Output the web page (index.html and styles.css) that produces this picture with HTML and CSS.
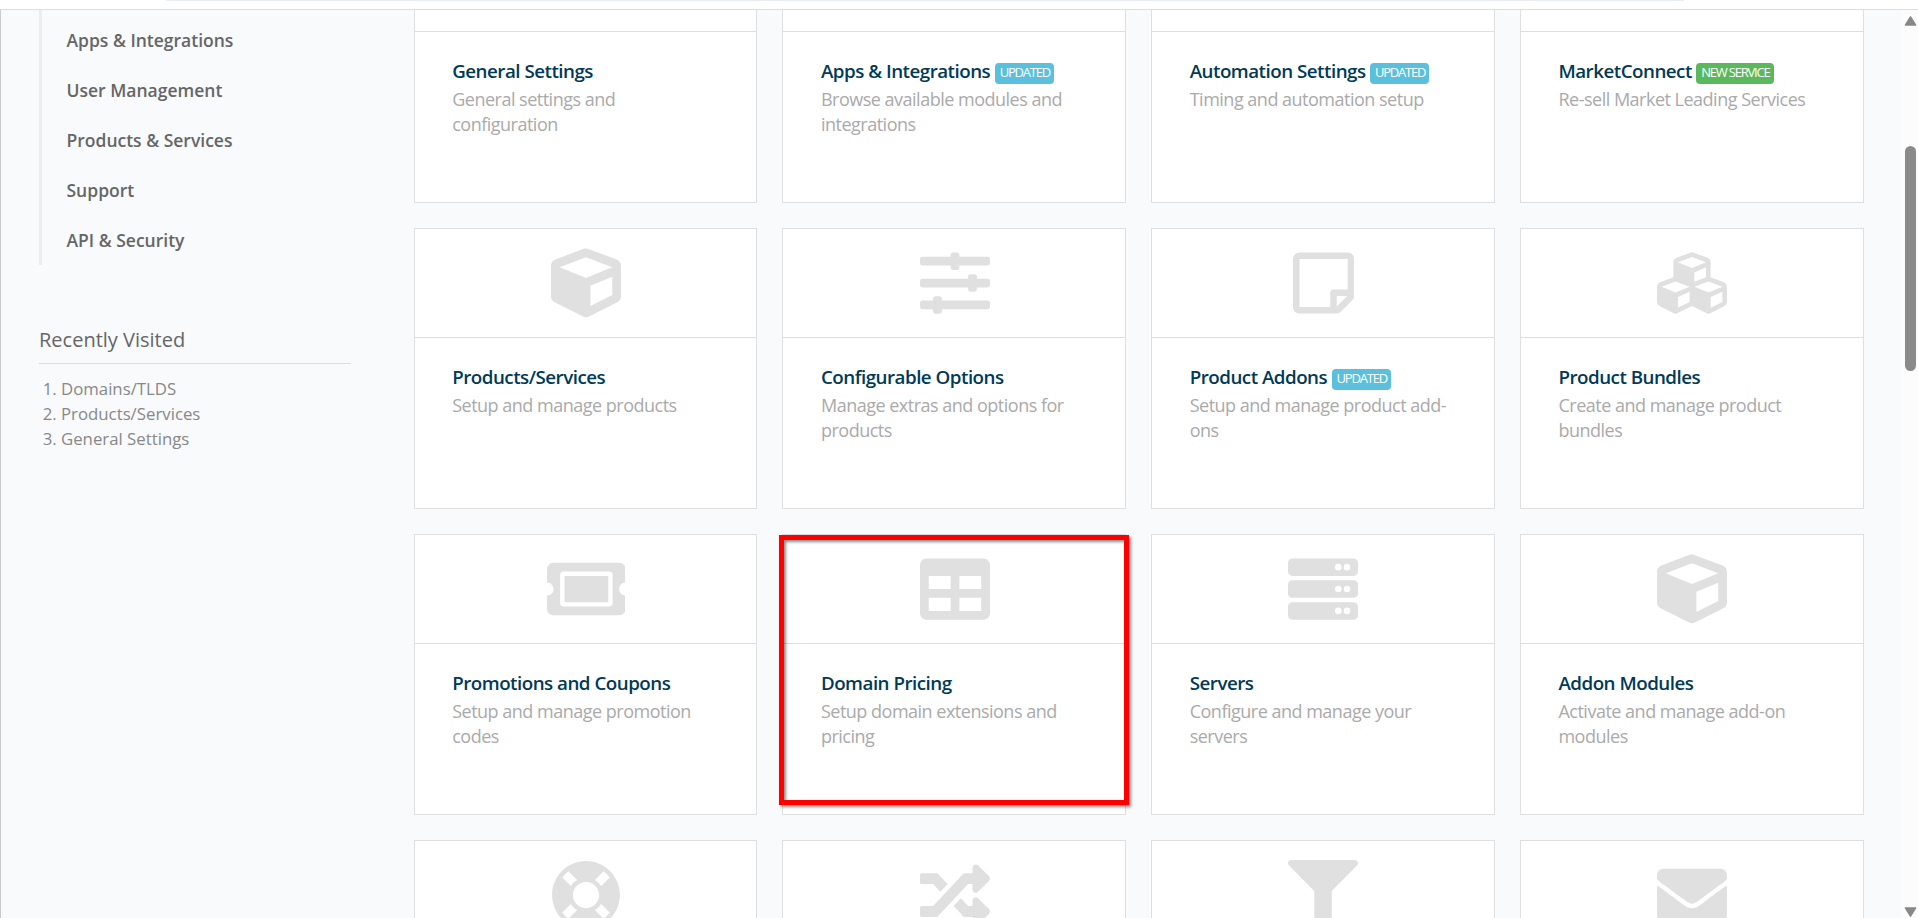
FILE: index.html
```html
<!DOCTYPE html>
<html lang="en">
<head>
  <meta charset="utf-8">
  <title>System Settings</title>
  <link rel="stylesheet" href="styles.css">
</head>
<body>
  <div class="topbar"><div class="address"></div></div>

  <div class="page">
    <div class="sidebar">
      <ul class="categories">
        <li>Apps &amp; Integrations</li>
        <li>User Management</li>
        <li>Products &amp; Services</li>
        <li>Support</li>
        <li>API &amp; Security</li>
      </ul>

      <h2>Recently Visited</h2>
      <ol class="recent">
        <li>Domains/TLDS</li>
        <li>Products/Services</li>
        <li>General Settings</li>
      </ol>
    </div>

    <div class="grid">
      <div class="card">
        <div class="icon"></div>
        <div class="info">
          <h3>General Settings</h3>
          <p>General settings and configuration</p>
        </div>
      </div>
      <div class="card">
        <div class="icon"></div>
        <div class="info">
          <h3>Apps &amp; Integrations <span class="label">UPDATED</span></h3>
          <p>Browse available modules and integrations</p>
        </div>
      </div>
      <div class="card">
        <div class="icon"></div>
        <div class="info">
          <h3>Automation Settings <span class="label">UPDATED</span></h3>
          <p>Timing and automation setup</p>
        </div>
      </div>
      <div class="card">
        <div class="icon"></div>
        <div class="info">
          <h3>MarketConnect <span class="label green">NEW SERVICE</span></h3>
          <p>Re-sell Market Leading Services</p>
        </div>
      </div>

      <div class="card">
        <div class="icon">
          <svg viewBox="0 0 512 512"><path id="cube" d="M239.1 6.3l-208 78c-18.7 7-31.1 25-31.1 45v225.1c0 18.2 10.3 34.8 26.5 42.9l208 104c13.5 6.8 29.4 6.8 42.9 0l208-104c16.3-8.1 26.5-24.8 26.5-42.9V129.3c0-20-12.4-37.9-31.1-44.9l-208-78C262 2.2 250 2.2 239.1 6.3zM256 68.4l192 72v1.1l-192 78-192-78v-1.1l192-72zm32 356V275.5l160-65v133.9l-160 80z"/></svg>
        </div>
        <div class="info">
          <h3>Products/Services</h3>
          <p>Setup and manage products</p>
        </div>
      </div>
      <div class="card">
        <div class="icon">
          <svg viewBox="0 0 512 512"><path d="M496 384H160v-16c0-8.8-7.2-16-16-16h-32c-8.8 0-16 7.2-16 16v16H16c-8.8 0-16 7.2-16 16v32c0 8.8 7.2 16 16 16h80v16c0 8.8 7.2 16 16 16h32c8.8 0 16-7.2 16-16v-16h336c8.8 0 16-7.2 16-16v-32c0-8.8-7.2-16-16-16zm0-160h-80v-16c0-8.8-7.2-16-16-16h-32c-8.8 0-16 7.2-16 16v16H16c-8.8 0-16 7.2-16 16v32c0 8.8 7.2 16 16 16h336v16c0 8.8 7.2 16 16 16h32c8.8 0 16-7.2 16-16v-16h80c8.8 0 16-7.2 16-16v-32c0-8.8-7.2-16-16-16zm0-160H288V48c0-8.8-7.2-16-16-16h-32c-8.8 0-16 7.2-16 16v16H16C7.2 64 0 71.2 0 80v32c0 8.8 7.2 16 16 16h208v16c0 8.8 7.2 16 16 16h32c8.8 0 16-7.2 16-16v-16h208c8.8 0 16-7.2 16-16V80c0-8.8-7.2-16-16-16z"/></svg>
        </div>
        <div class="info">
          <h3>Configurable Options</h3>
          <p>Manage extras and options for products</p>
        </div>
      </div>
      <div class="card">
        <div class="icon">
          <svg viewBox="0 0 448 512"><path d="M448 348.106V80c0-26.51-21.49-48-48-48H48C21.49 32 0 53.49 0 80v351.988c0 26.51 21.49 48 48 48h268.118a48 48 0 0 0 33.941-14.059l83.882-83.882A48 48 0 0 0 448 348.106zm-128 80v-76.118h76.118L320 428.106zM400 80v223.988H296c-13.255 0-24 10.745-24 24v104H48V80h352z"/></svg>
        </div>
        <div class="info">
          <h3>Product Addons <span class="label">UPDATED</span></h3>
          <p>Setup and manage product add-ons</p>
        </div>
      </div>
      <div class="card">
        <div class="icon">
          <svg viewBox="0 0 512 512"><path d="M488.6 250.2L392 214V105.5c0-15-9.3-28.4-23.4-33.7l-100-37.5c-8.1-3.1-17.1-3.1-25.3 0l-100 37.5c-14.1 5.3-23.4 18.7-23.4 33.7V214l-96.6 36.2C9.3 255.5 0 268.9 0 283.9V394c0 13.6 7.7 26.1 19.9 32.2l100 50c10.1 5.1 22.1 5.1 32.2 0l103.9-52 103.9 52c10.1 5.1 22.1 5.1 32.2 0l100-50c12.2-6.1 19.9-18.6 19.9-32.2V283.9c0-15-9.3-28.4-23.4-33.7zM358 214.8l-85 31.9v-68.2l85-37v73.3zM154 104.1l102-38.2 102 38.2v.6l-102 41.4-102-41.4v-.6zm84 291.1l-85 42.5v-79.1l85-38.8v75.4zm0-112l-102 41.4-102-41.4v-.6l102-38.2 102 38.2v.6zm240 112l-85 42.5v-79.1l85-38.8v75.4zm0-112l-102 41.4-102-41.4v-.6l102-38.2 102 38.2v.6z"/></svg>
        </div>
        <div class="info">
          <h3>Product Bundles</h3>
          <p>Create and manage product bundles</p>
        </div>
      </div>

      <div class="card">
        <div class="icon">
          <svg viewBox="0 0 576 512"><path d="M128 160h320v192H128V160zm400 96c0 26.51 21.49 48 48 48v96c0 26.51-21.49 48-48 48H48c-26.51 0-48-21.49-48-48v-96c26.51 0 48-21.49 48-48s-21.49-48-48-48v-96c0-26.51 21.49-48 48-48h480c26.51 0 48 21.49 48 48v96c-26.51 0-48 21.49-48 48zm-48-104c0-13.255-10.745-24-24-24H120c-13.255 0-24 10.745-24 24v208c0 13.255 10.745 24 24 24h336c13.255 0 24-10.745 24-24V152z"/></svg>
        </div>
        <div class="info">
          <h3>Promotions and Coupons</h3>
          <p>Setup and manage promotion codes</p>
        </div>
      </div>
      <div class="card highlighted">
        <div class="icon">
          <svg viewBox="0 0 512 512"><path d="M464 32H48C21.49 32 0 53.49 0 80v352c0 26.51 21.49 48 48 48h416c26.51 0 48-21.49 48-48V80c0-26.51-21.49-48-48-48zM224 416H64v-96h160v96zm0-160H64v-96h160v96zm224 160H288v-96h160v96zm0-160H288v-96h160v96z"/></svg>
        </div>
        <div class="info">
          <h3>Domain Pricing</h3>
          <p>Setup domain extensions and pricing</p>
        </div>
      </div>
      <div class="card">
        <div class="icon">
          <svg viewBox="0 0 512 512">
            <rect y="32" width="512" height="128" rx="32"/>
            <rect y="192" width="512" height="128" rx="32"/>
            <rect y="352" width="512" height="128" rx="32"/>
            <g fill="#fff">
              <circle cx="368" cy="96" r="24"/><circle cx="432" cy="96" r="24"/>
              <circle cx="368" cy="256" r="24"/><circle cx="432" cy="256" r="24"/>
              <circle cx="368" cy="416" r="24"/><circle cx="432" cy="416" r="24"/>
            </g>
          </svg>
        </div>
        <div class="info">
          <h3>Servers</h3>
          <p>Configure and manage your servers</p>
        </div>
      </div>
      <div class="card">
        <div class="icon">
          <svg viewBox="0 0 512 512"><use href="#cube"/></svg>
        </div>
        <div class="info">
          <h3>Addon Modules</h3>
          <p>Activate and manage add-on modules</p>
        </div>
      </div>

      <div class="card">
        <div class="icon">
          <svg viewBox="0 0 512 512"><path d="M256 8C119.033 8 8 119.033 8 256s111.033 248 248 248 248-111.033 248-248S392.967 8 256 8zm173.696 119.559l-63.399 63.399c-10.987-18.559-26.67-34.252-45.255-45.255l63.399-63.399a218.396 218.396 0 0 1 45.255 45.255zM256 352c-53.019 0-96-42.981-96-96s42.981-96 96-96 96 42.981 96 96-42.981 96-96 96zM127.559 82.304l63.399 63.399c-18.559 10.987-34.252 26.67-45.255 45.255l-63.399-63.399a218.372 218.372 0 0 1 45.255-45.255zM82.304 384.441l63.399-63.399c10.987 18.559 26.67 34.252 45.255 45.255l-63.399 63.399a218.396 218.396 0 0 1-45.255-45.255zm302.137 45.255l-63.399-63.399c18.559-10.987 34.252-26.67 45.255-45.255l63.399 63.399a218.403 218.403 0 0 1-45.255 45.255z"/></svg>
        </div>
      </div>
      <div class="card">
        <div class="icon">
          <svg viewBox="0 0 512 512"><path d="M504.971 359.029c9.373 9.373 9.373 24.569 0 33.941l-80 79.984c-15.01 15.01-40.971 4.49-40.971-16.971V416h-58.785a12.004 12.004 0 0 1-8.773-3.812l-70.556-75.596 53.333-57.143L352 336h32v-39.981c0-21.438 25.943-31.998 40.971-16.971l80 79.981zM12 176h84l52.781 56.551 53.333-57.143-70.556-75.596A11.999 11.999 0 0 0 122.785 96H12c-6.627 0-12 5.373-12 12v56c0 6.627 5.373 12 12 12zm372 0v39.984c0 21.46 25.961 31.98 40.971 16.971l80-79.984c9.373-9.373 9.373-24.569 0-33.941l-80-79.981C409.943 24.021 384 34.582 384 56.019V96h-58.785a12.004 12.004 0 0 0-8.773 3.812L96 336H12c-6.627 0-12 5.373-12 12v56c0 6.627 5.373 12 12 12h110.785c3.326 0 6.503-1.381 8.773-3.812L352 176h32z"/></svg>
        </div>
      </div>
      <div class="card">
        <div class="icon">
          <svg viewBox="0 0 512 512"><path d="M487.976 0H24.028C2.71 0-8.047 25.866 7.058 40.971L192 225.941V432c0 7.831 3.821 15.17 10.237 19.662l80 55.98C298.02 518.69 320 507.493 320 487.98V225.941l184.947-184.97C520.021 25.896 509.338 0 487.976 0z"/></svg>
        </div>
      </div>
      <div class="card">
        <div class="icon">
          <svg viewBox="0 0 512 512"><path d="M502.3 190.8c3.9-3.1 9.7-.2 9.7 4.7V400c0 26.5-21.5 48-48 48H48c-26.5 0-48-21.5-48-48V195.6c0-5 5.7-7.8 9.7-4.7 22.4 17.4 52.1 39.5 154.1 113.6 21.1 15.4 56.7 47.8 92.2 47.6 35.7.3 72-32.8 92.3-47.6 102-74.1 131.6-96.3 154-113.7zM256 320c23.2.4 56.6-29.2 73.4-41.4 132.7-96.3 142.8-104.7 173.4-128.7 5.8-4.5 9.2-11.5 9.2-18.9v-19c0-26.5-21.5-48-48-48H48c-26.5 0-48 21.5-48 48v19c0 7.4 3.4 14.3 9.2 18.9 30.6 23.9 40.7 32.4 173.4 128.7 16.8 12.2 50.2 41.8 73.4 41.4z"/></svg>
        </div>
      </div>
    </div>

    <div class="scrollbar">
      <svg class="arrow" viewBox="0 0 12 10"><path d="M6 1L11 9H1z" stroke-width="1.5" stroke-linejoin="round"/></svg>
      <div class="thumb"></div>
      <svg class="arrow" viewBox="0 0 12 10"><path d="M6 9L1 1h10z" stroke-width="1.5" stroke-linejoin="round"/></svg>
    </div>
  </div>
</body>
</html>
```
FILE: styles.css
```css
*, *::after {
  box-sizing: border-box;
}

body {
  display: flex;
  flex-direction: column;
  height: 918px;
  margin: 0;
  overflow: hidden;
  background: #f8fafc;
  color: #666;
  font-family: "Open Sans", "Liberation Sans", sans-serif;
  font-size: 17.5px;
  line-height: 25px;
}

h2, h3, p, ul, ol {
  margin: 0;
  padding: 0;
  font-weight: normal;
}

.topbar {
  flex: none;
  height: 10px;
  background: #fff;
  border-bottom: 1px solid #dcdedf;
}

.address {
  width: 1518px;
  height: 1px;
  margin-left: 166px;
  background: #ebedf5;
}

.page {
  flex: 1;
  display: flex;
  min-height: 0;
  overflow: hidden;
  border-left: 1px solid #c8cacc;
}

.sidebar {
  flex: none;
  width: 349.6px;
  margin: 0 25px 0 38px;
}

.categories {
  width: 312px;
  padding: 5px 0 0 24.5px;
  border-left: 3px solid #ebedee;
  list-style: none;
  font-weight: 600;
}

.categories li {
  height: 50px;
  line-height: 50px;
}

.sidebar h2 {
  width: 312px;
  height: 48px;
  margin-top: 51px;
  padding-top: 10px;
  border-bottom: 1px solid #dcdedf;
  font-size: 20px;
  line-height: 27px;
}

.recent {
  margin-top: 12px;
  padding-left: 22px;
  color: #888;
  font-size: 16.8px;
}

.grid {
  flex: none;
  width: 1450px;
  display: grid;
  grid-template-columns: repeat(4, 1fr);
  grid-auto-rows: 281px;
  gap: 25px;
  margin-top: -88px;
}

.card {
  position: relative;
  background: #fff;
  border: 1px solid #dddfe1;
}

.icon {
  display: flex;
  align-items: center;
  justify-content: center;
  height: 109px;
  padding-left: 1px;
  border-bottom: 1px solid #dddfe1;
}

.icon svg {
  height: 70px;
  fill: #e0e0e0;
}

.info {
  padding: 25px 36px 0 37.6px;
}

h3 {
  height: 30px;
  color: #003a57;
  font-size: 18.75px;
  font-weight: 600;
  line-height: 28px;
  letter-spacing: -0.5px;
  white-space: nowrap;
}

.info p {
  color: #aaa;
  font-size: 18px;
  letter-spacing: -0.5px;
}

.label {
  display: inline-block;
  height: 21px;
  padding: 0 4px 0 5px;
  border-radius: 4px;
  background: #5bc0de;
  color: #fff;
  font-size: 13px;
  font-weight: 400;
  line-height: 19px;
  letter-spacing: -1.2px;
  vertical-align: 1px;
}

.green {
  background: #5cb85c;
}

/* marker drawn over the card edges */
.highlighted::after {
  content: "";
  position: absolute;
  top: 0;
  left: -4px;
  width: 350px;
  height: 270px;
  border: 5px solid #f00;
  box-shadow: 2px 2px 3px rgba(0, 0, 0, 0.45), inset 2px 2px 3px rgba(0, 0, 0, 0.45);
}

.scrollbar {
  flex: none;
  display: flex;
  flex-direction: column;
  align-items: center;
  width: 17px;
  margin-left: auto;
  padding: 6px 0 1px 2px;
  background: #fcfcfd;
}

.arrow {
  width: 13px;
  height: 10px;
  fill: #888;
  stroke: #888;
}

.arrow:last-child {
  margin-top: auto;
}

.thumb {
  width: 11px;
  height: 225px;
  margin-top: 120px;
  border-radius: 6px;
  background: #8a8a8a;
}
```
